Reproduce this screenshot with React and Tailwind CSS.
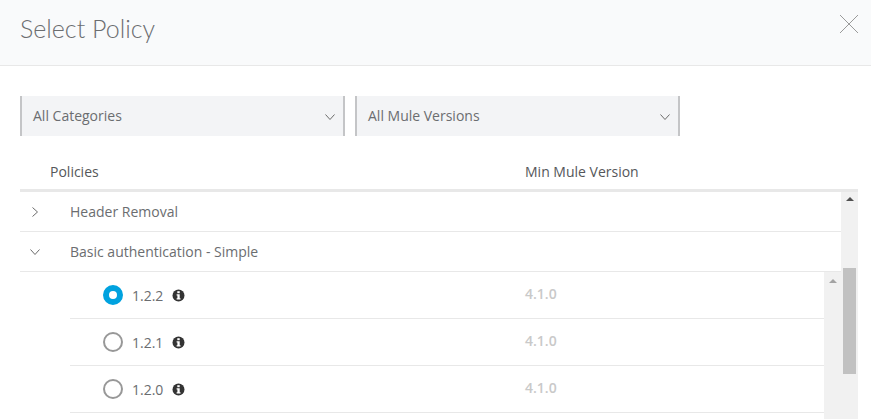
import React from 'react';

const versions = [
  { id: '1.2.2', selected: true },
  { id: '1.2.1', selected: false },
  { id: '1.2.0', selected: false },
];

function Chevron({ className }) {
  return (
    <svg className={className} width="10" height="6" viewBox="0 0 10 6" fill="none" stroke="#6b6b6b" strokeWidth="1">
      <path d="M0.5 0.5 L5 5.5 L9.5 0.5" />
    </svg>
  );
}

function InfoIcon() {
  return (
    <svg width="13" height="13" viewBox="0 0 13 13" className="ml-[9px] mt-px">
      <circle cx="6.5" cy="6.5" r="6" fill="#333" />
      <rect x="5.3" y="2.2" width="2.4" height="2" fill="#fff" />
      <path d="M4.6 5.2 H7.7 V9.2 H8.5 V10.6 H4.6 V9.2 H5.4 V6.6 H4.6 Z" fill="#fff" />
    </svg>
  );
}

function Filter({ label }) {
  return (
    <div className="flex h-10 w-[325px] items-center justify-between border-x-2 border-[#c4c5c7] bg-[#f3f4f6] pl-[11px] pr-[8px] text-[14px] text-[#6b6d70]">
      <span className="-mt-[2px]">{label}</span>
      <Chevron className="mt-px" />
    </div>
  );
}

function Arrow({ color }) {
  return (
    <svg width="8" height="4" viewBox="0 0 8 4">
      <path d="M0 4 L4 0 L8 4 Z" fill={color} />
    </svg>
  );
}

function VersionRow({ version }) {
  return (
    <div className="flex h-[47px] items-center border-b border-[#e8e8e8]">
      <div className="flex w-[455px] items-center pl-[33px]">
        {version.selected ? (
          <span className="h-5 w-5 rounded-full border-[6px] border-[#00a2df] bg-white" />
        ) : (
          <span className="h-5 w-5 rounded-full border-2 border-[#989898] bg-white" />
        )}
        <span className="ml-[9px] text-[14px] text-[#6b6d70]">{version.id}</span>
        <InfoIcon />
      </div>
      <span className="-mt-[3px] text-[14px] font-semibold text-[#c9c9c9]">4.1.0</span>
    </div>
  );
}

export default function App() {
  return (
    <div className="h-[419px] w-[871px] overflow-hidden bg-white font-['Open_Sans',sans-serif]">
      <div className="flex h-[66px] items-start justify-between border-b border-[#e8e8e8] bg-[#f9fafb] pl-5 pr-[12px]">
        <h1 className="mt-[12px] font-['Lato',sans-serif] text-[25px] font-light leading-[32px] text-[#6b6d70]">Select Policy</h1>
        <svg width="20" height="20" viewBox="0 0 20 20" className="mt-[14px]" stroke="#9a9a9a" strokeWidth="1" fill="none">
          <path d="M1 1 L19 19 M19 1 L1 19" />
        </svg>
      </div>

      <div className="mt-[30px] flex gap-[10px] pl-5">
        <Filter label="All Categories" />
        <Filter label="All Mule Versions" />
      </div>

      <div className="ml-5 mt-[25px] w-[838px]">
        <div className="flex h-[31px] border-b-[3px] border-[#e8e8e8] text-[14px] font-medium text-[#55575a]">
          <span className="w-[505px] pl-[30px]">Policies</span>
          <span>Min Mule Version</span>
        </div>

        <div className="flex">
          <div className="w-[821px]">
            <div className="flex h-10 items-center border-b border-[#e8e8e8] text-[14px] text-[#6b6d70]">
              <span className="flex w-[30px] justify-center">
                <Chevron className="-rotate-90" />
              </span>
              <span className="ml-5">Header Removal</span>
            </div>
            <div className="flex h-10 items-center border-b border-[#e8e8e8] text-[14px] text-[#6b6d70]">
              <span className="flex w-[30px] justify-center pr-px">
                <Chevron />
              </span>
              <span className="ml-5">Basic authentication - Simple</span>
            </div>
            <div className="flex">
              <div className="ml-[50px] w-[754px]">
                {versions.map((v) => (
                  <VersionRow key={v.id} version={v} />
                ))}
              </div>
              <div className="flex h-[147px] w-[17px] justify-center bg-[#f1f1f1] pt-[7px]">
                <Arrow color="#a3a3a3" />
              </div>
            </div>
          </div>

          <div className="h-[227px] w-[17px] bg-[#f1f1f1] px-[2px] pt-[5px]">
            <div className="flex justify-center">
              <Arrow color="#505050" />
            </div>
            <div className="mt-[67px] h-[106px] bg-[#c1c1c1]" />
          </div>
        </div>
      </div>
    </div>
  );
}
